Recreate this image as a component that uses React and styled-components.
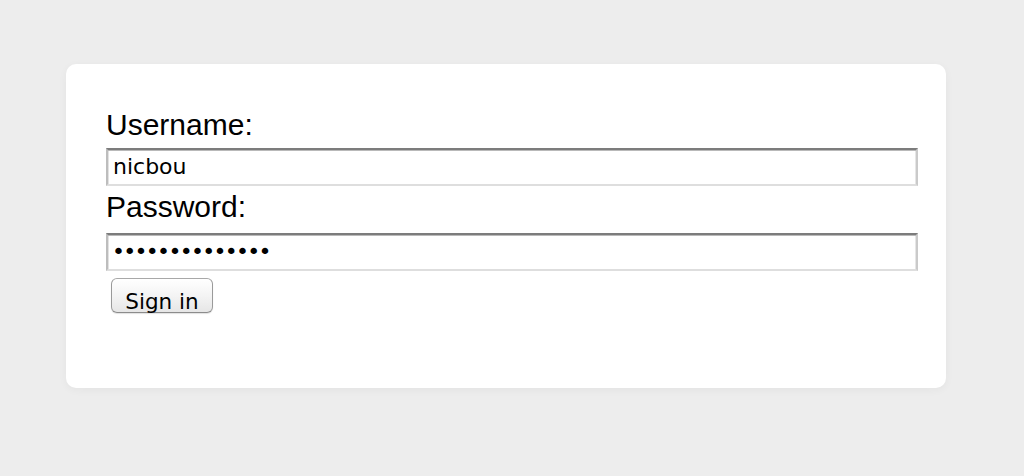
import styled, { createGlobalStyle } from "styled-components";

const GlobalStyle = createGlobalStyle`
  html, body {
    margin: 0;
    padding: 0;
    background: #ededed;
  }
  body {
    font-family: "Liberation Sans", Arial, sans-serif;
  }
`;

const App = () => {
  return (
    <Page>
      <GlobalStyle />
      <Card>
        <LoginForm onSubmit={(e) => e.preventDefault()}>
          <Label htmlFor="username">Username:</Label>
          <TextInput id="username" type="text" defaultValue="nicbou" />
          <Label htmlFor="password" $top={4} $bottom={9}>
            Password:
          </Label>
          <TextInput
            id="password"
            type="password"
            defaultValue="nicboupassword"
            $secret
          />
          <SignInButton type="submit">Sign in</SignInButton>
        </LoginForm>
      </Card>
    </Page>
  );
};

export default App;

const Page = styled.div`
  min-height: 476px;
  padding: 64px 0 0 66px;
  box-sizing: border-box;
`;

const Card = styled.div`
  width: 880px;
  height: 324px;
  box-sizing: border-box;
  padding: 44px 28px 0 40px;
  background: #ffffff;
  border-radius: 10px;
  box-shadow: 0 2px 8px rgba(0, 0, 0, 0.045);
`;

const LoginForm = styled.form`
  display: flex;
  flex-direction: column;
  align-items: flex-start;
`;

const Label = styled.label`
  display: block;
  font-family: "Liberation Sans", Arial, sans-serif;
  font-size: 30px;
  line-height: 34px;
  color: #000;
  margin-top: ${({ $top }) => $top || 0}px;
  margin-bottom: ${({ $bottom }) => $bottom ?? 6}px;
`;

const TextInput = styled.input`
  width: 812px;
  height: 38px;
  box-sizing: border-box;
  margin: 0;
  padding: 0 4px 2px ${({ $secret }) => ($secret ? 4 : 5)}px;
  font-family: "DejaVu Sans", Verdana, sans-serif;
  font-size: 22px;
  color: #000;
  background: #fff;
  border: 2px solid;
  border-color: #7c7c7c #cacaca #dedede #bdbdbd;
  border-radius: 0;
  box-shadow: inset 0 1px 0 #b9b9b9, inset 1px 0 0 #e2e2e2,
    inset -1px 0 0 #e6e6e6;
  outline: none;
  letter-spacing: ${({ $secret }) => ($secret ? "-1.7px" : "0")};
`;

const SignInButton = styled.button`
  width: 102px;
  height: 35px;
  box-sizing: border-box;
  margin: 7px 0 0 5px;
  padding: 12px 0 0;
  font-family: "DejaVu Sans", Verdana, sans-serif;
  font-size: 21.5px;
  line-height: 22px;
  color: #000;
  text-align: center;
  background: linear-gradient(#ffffff, #f4f4f4 50%, #e6e6e6);
  border: 1px solid #9a9a9a;
  border-top-color: #a8a8a8;
  border-bottom-color: #8c8c8c;
  border-radius: 6px;
  box-shadow: 0 1px 1px rgba(0, 0, 0, 0.12);
  cursor: pointer;
`;
